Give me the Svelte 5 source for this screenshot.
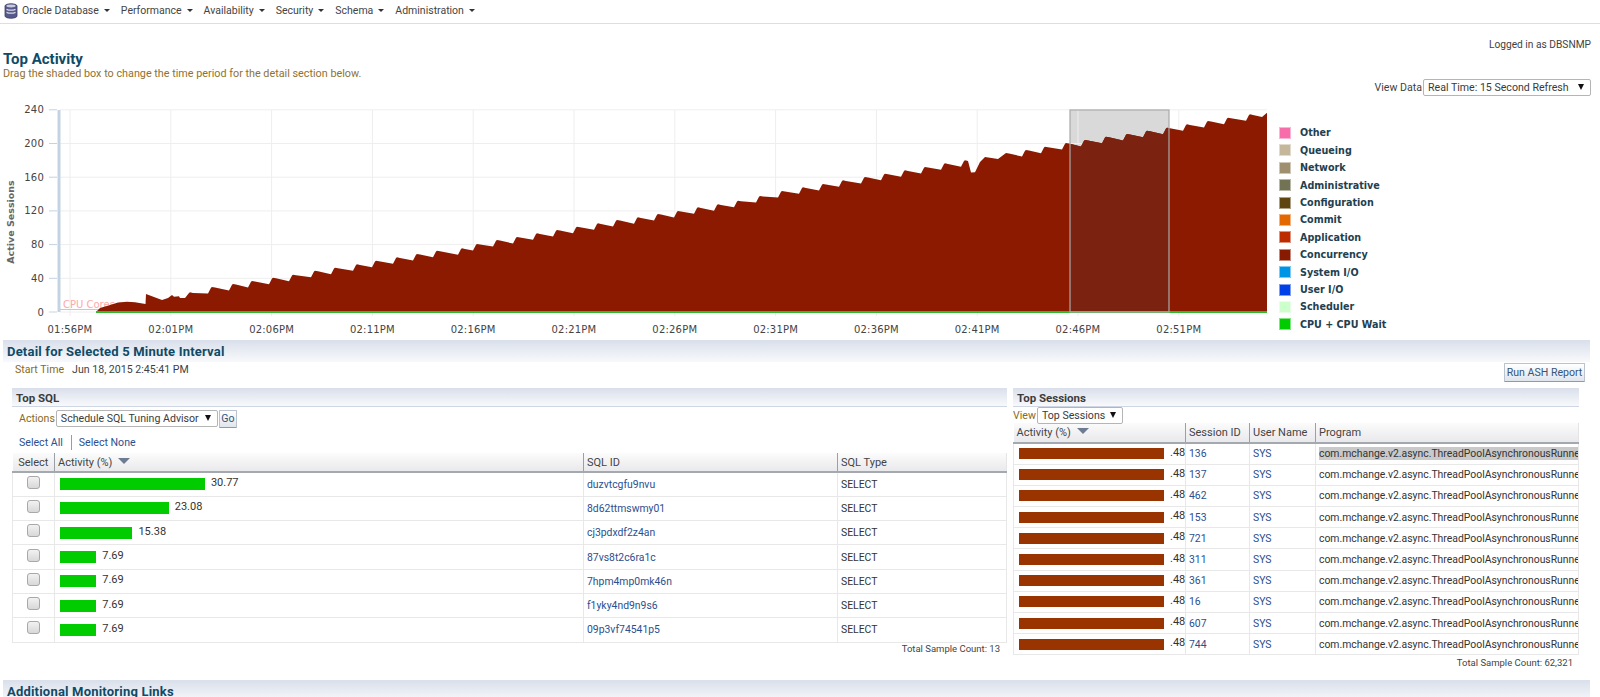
<script>
  const navItems = ['Oracle Database', 'Performance', 'Availability', 'Security', 'Schema', 'Administration'];
  const legend = [
    ['Other', '#f76daa'], ['Queueing', '#c5b79b'], ['Network', '#9f8f6f'], ['Administrative', '#717354'],
    ['Configuration', '#5f4510'], ['Commit', '#e46800'], ['Application', '#bd2b00'], ['Concurrency', '#871a00'],
    ['System I/O', '#0094e7'], ['User I/O', '#0042e7'], ['Scheduler', '#ccffcc'], ['CPU + CPU Wait', '#00cc00']
  ];
  const sql = [
    [30.77, 'duzvtcgfu9nvu'], [23.08, '8d62ttmswmy01'], [15.38, 'cj3pdxdf2z4an'], [7.69, '87vs8t2c6ra1c'],
    [7.69, '7hpm4mp0mk46n'], [7.69, 'f1yky4nd9n9s6'], [7.69, '09p3vf74541p5']
  ];
  const sessions = [136, 137, 462, 153, 721, 311, 361, 16, 607, 744];
  const program = 'com.mchange.v2.async.ThreadPoolAsynchronousRunne';

  const X0 = 70, DX = 100.8, Y0 = 312, KY = 33.7 / 40;
  const times = ['01:56', '02:01', '02:06', '02:11', '02:16', '02:21', '02:26', '02:31', '02:36', '02:41', '02:46', '02:51'];
  const xTicks = times.map((t, i) => ({ t: t + 'PM', x: X0 + i * DX }));
  const yTicks = [0, 40, 80, 120, 160, 200, 240].map((v) => ({ v, y: Y0 - v * KY }));

  const start = [[96, 312], [100, 308], [110, 305], [118, 302.5], [127, 301.7], [135, 302.3], [145.5, 304], [146, 294], [154, 297], [162, 300], [168, 298], [172, 295], [174, 296.7], [179, 296.3], [180, 298], [185, 298]];
  const peaks = [
    [190, 292.3], [212, 287], [233, 284], [252, 281], [273, 277.7], [293, 274.7], [315, 270.7], [335, 267.7],
    [357, 264.3], [376, 260.7], [397, 257.3], [417, 254], [437, 250.7], [462, 248.3], [477, 244], [497, 240],
    [517, 237], [537, 233.3], [557, 230], [577, 226.7], [598, 223.3], [617, 220], [638, 217.3], [658, 214],
    [678, 211], [698, 207.3], [718, 204.3], [738, 200.7], [760, 196], [782, 191], [803, 187.3], [823, 184],
    [843, 180.3], [865, 177], [885, 173.7], [905, 170.3], [925, 167], [945, 163.3], [965, 160.3]
  ];
  const peaksAfterDip = [
    [1006, 153], [1026, 150], [1045, 146.7], [1066, 143], [1085, 140], [1106, 136.7], [1127, 134], [1147, 130.7],
    [1167, 127.7], [1187, 124.3], [1208, 121], [1228, 117.7], [1250, 114.3]
  ];
  function teeth(list, next) {
    const out = [];
    list.forEach((q, i) => {
      const n = list[i + 1] || next;
      out.push([q[0] - 1, q[1] + 0.8], q, [q[0] + 3, q[1] + 0.6], [n[0] - 4, n[1] + 6.5]);
    });
    return out;
  }
  const pts = [
    ...start,
    ...teeth(peaks, [975, 166]),
    [975, 172.3], [980, 162], [985, 157], [998, 159],
    ...teeth(peaksAfterDip, [1266, 110.5]),
    [1267, 112.7], [1267, 312]
  ];
  const area = 'M' + pts.map((q) => q[0].toFixed(1) + ' ' + q[1].toFixed(1)).join('L') + 'Z';
</script>

<div class="page">
  <nav class="nav">
    <svg class="db" width="14" height="16" viewBox="0 0 14 16" aria-hidden="true">
      <path d="M1 3c0-3 12-3 12 0v10c0 3-12 3-12 0z" fill="#55588a" stroke="#3d3f66" stroke-width=".8" />
      <path d="M2.5 6.3c2.5 1 6.5 1 9 0M2.5 9.3c2.5 1 6.5 1 9 0" stroke="#d9d8e8" stroke-width="1.3" fill="none" />
      <ellipse cx="7" cy="3" rx="4.6" ry="1.4" fill="#c9c9df" />
    </svg>
    {#each navItems as item}
      <span class="nav-item">{item}<i class="caret"></i></span>
    {/each}
  </nav>

  <header class="head">
    <div class="head-left">
      <h1>Top Activity</h1>
      <p>Drag the shaded box to change the time period for the detail section below.</p>
    </div>
    <div class="head-right">
      <div class="logged">Logged in as DBSNMP</div>
      <div class="view-data">
        <span>View Data</span>
        <span class="select w-real"><select><option>Real Time: 15 Second Refresh</option></select><i></i></span>
      </div>
    </div>
  </header>

  <div class="chart-row">
    <svg class="chart" width="1270" height="238" viewBox="0 100 1270 238">
      <defs>
        <clipPath id="sel"><rect x="1070" y="110" width="99" height="202" /></clipPath>
      </defs>
      <rect x="1070" y="110" width="99" height="202" fill="#d9d9d9" />
      {#each yTicks as t}
        <line x1="60" x2="1267" y1={t.y} y2={t.y} class="grid" />
        <line x1="49" x2="57" y1={t.y} y2={t.y} class="tick" />
        <text x="44" y={t.y + 3.5} text-anchor="end" class="axis">{t.v}</text>
      {/each}
      {#each xTicks as t}
        <line x1={t.x} x2={t.x} y1="110" y2="316" class="grid" />
        <text x={t.x} y="333" text-anchor="middle" class="axis">{t.t}</text>
      {/each}
      <rect x="57.5" y="110" width="3" height="202" fill="#c3d3e3" />
      <line x1="60" x2="110" y1="309.5" y2="309.5" stroke="#ffb0b0" />
      <text x="63" y="308" class="cores">CPU Cores</text>
      <path d={area} fill="#8b1a00" />
      <path d={area} fill="#7b2310" clip-path="url(#sel)" />
      <rect x="96" y="311" width="1171" height="2" fill="#2fbb2f" />
      <rect x="1070" y="110" width="99" height="202" fill="none" stroke="#a9a9a9" stroke-width="1.2" />
      <text transform="translate(14 222) rotate(-90)" text-anchor="middle" class="ylabel">Active Sessions</text>
    </svg>
    <ul class="legend">
      {#each legend as [name, color]}
        <li><i style="background:{color}"></i>{name}</li>
      {/each}
    </ul>
  </div>

  <div class="band">Detail for Selected 5 Minute Interval</div>

  <div class="start-row">
    <div><span class="lbl">Start Time</span><span class="start-val">Jun 18, 2015 2:45:41 PM</span></div>
    <button class="btn ash">Run ASH Report</button>
  </div>

  <div class="panels">
    <section class="panel left">
      <h2>Top SQL</h2>
      <div class="actions">
        <span class="lbl">Actions</span>
        <span class="select w-act"><select><option>Schedule SQL Tuning Advisor</option></select><i></i></span>
        <button class="btn go">Go</button>
      </div>
      <div class="sel-links"><a href="#a">Select All</a><b></b><a href="#a">Select None</a></div>
      <table class="tbl sql">
        <colgroup><col style="width:42px" /><col style="width:529px" /><col style="width:254px" /><col /></colgroup>
        <thead>
          <tr><th class="c">Select</th><th>Activity (%)<i class="sort"></i></th><th>SQL ID</th><th>SQL Type</th></tr>
        </thead>
        <tbody>
          {#each sql as [pct, id]}
            <tr>
              <td class="c"><span class="check"></span></td>
              <td class="act"><div class="barcell"><span class="bar green" style="width:{pct * 4.71}px"></span><span class="val">{pct}</span></div></td>
              <td><a href="#a">{id}</a></td>
              <td>SELECT</td>
            </tr>
          {/each}
        </tbody>
      </table>
      <div class="total">Total Sample Count: 13</div>
    </section>

    <section class="panel right">
      <h2>Top Sessions</h2>
      <div class="viewrow">
        <span class="lbl">View</span>
        <span class="select w-top"><select><option>Top Sessions</option></select><i></i></span>
      </div>
      <table class="tbl sess">
        <colgroup><col style="width:172px" /><col style="width:64px" /><col style="width:66px" /><col /></colgroup>
        <thead>
          <tr><th>Activity (%)<i class="sort"></i></th><th>Session ID</th><th>User Name</th><th>Program</th></tr>
        </thead>
        <tbody>
          {#each sessions as id, i}
            <tr>
              <td class="act"><div class="barcell"><span class="bar brown"></span><span class="val s">.48</span></div></td>
              <td><a href="#a">{id}</a></td>
              <td><a href="#a">SYS</a></td>
              <td class="prog"><span class:hl={i === 0}>{program}</span></td>
            </tr>
          {/each}
        </tbody>
      </table>
      <div class="total t2">Total Sample Count: 62,321</div>
    </section>
  </div>

  <div class="band">Additional Monitoring Links</div>
</div>

<style>
  :global(body) { margin: 0; background: #fff; }
  .page {
    height: 697px;
    overflow: hidden;
    font-family: Roboto, "Liberation Sans", sans-serif;
    font-size: 10.6px;
    color: #3f3f3f;
  }
  .nav {
    height: 24px;
    box-sizing: border-box;
    border-bottom: 1px solid #d6e0ea;
    display: flex;
    align-items: center;
    padding: 0 0 3px 4px;
    font-size: 10.5px;
    color: #444;
  }
  .db { margin-right: 4px; margin-top: 1px; }
  .nav-item { display: inline-flex; align-items: center; margin-right: 11px; white-space: nowrap; }
  .caret {
    width: 0; height: 0; margin-left: 5px;
    border-left: 3px solid transparent; border-right: 3px solid transparent;
    border-top: 3px solid #333;
  }
  .head { display: flex; justify-content: space-between; height: 73px; padding: 0 9px 0 3px; margin-bottom: 3px; }
  .head-left { padding-top: 27px; }
  h1 { margin: 0; font: bold 15px/16px Roboto, sans-serif; color: #0f4a66; }
  .head-left p { margin: 1px 0 0; font-size: 10.8px; line-height: 12px; color: #8f7230; }
  .head-right { display: flex; flex-direction: column; align-items: flex-end; padding-top: 14px; }
  .logged { line-height: 13px; height: 41px; font-size: 10.2px; }
  .view-data { display: flex; align-items: center; gap: 1px; }

  .select { position: relative; display: inline-block; }
  .select select {
    appearance: none; -webkit-appearance: none;
    display: block; width: 100%; height: 100%; box-sizing: border-box;
    margin: 0; padding: 0 0 0 4px;
    background: #fff; border: 1px solid #b5b5b5; border-radius: 2px;
    font: inherit; font-size: 10.6px; color: #3a3a3a;
  }
  .select i {
    position: absolute; right: 7px; top: 5px; width: 0; height: 0;
    border-left: 3px solid transparent; border-right: 3px solid transparent;
    border-top: 6px solid #111;
    pointer-events: none;
  }
  .w-real { width: 168px; height: 17px; }
  .w-act { width: 162px; height: 17px; }
  .w-top { width: 86px; height: 17px; }

  .chart-row { display: flex; height: 240px; }
  .chart { display: block; flex: none; }
  .grid { stroke: #eeeeee; stroke-width: 1; }
  .tick { stroke: #c3d3e3; }
  .axis { font: 10px "DejaVu Sans", sans-serif; fill: #444; letter-spacing: .2px; }
  .cores { font: 10px "DejaVu Sans", sans-serif; fill: #ffa8a8; }
  .ylabel { font: bold 9.5px "DejaVu Sans", sans-serif; fill: #666; }
  .legend { list-style: none; margin: 24.3px 0 0 9px; padding: 0; }
  .legend li {
    height: 17.4px; display: flex; align-items: center;
    font: bold 9.6px "DejaVu Sans", sans-serif; color: #23404f; white-space: nowrap;
  }
  .legend i { width: 10px; height: 10px; border: 1px solid rgba(255, 255, 255, .5); margin-right: 9px; }

  .band {
    height: 22px; margin: 0 10px 0 3px; padding-left: 4px;
    background: linear-gradient(#d9dfeb, #f8f9fb);
    font: bold 13px/23px Roboto, sans-serif; color: #0f4a66; white-space: nowrap; letter-spacing: .2px;
  }
  .start-row {
    height: 26px; box-sizing: border-box; display: flex; justify-content: space-between; align-items: flex-start;
    padding: 1px 15px 0 15px; line-height: 14px;
  }
  .lbl { color: #8a6a20; }
  .start-val { margin-left: 8px; }
  .btn {
    box-sizing: border-box; margin: 0; padding: 0; white-space: nowrap;
    background: linear-gradient(#ffffff, #dfe5ee);
    border: 1px solid #b9c2cd; border-bottom-color: #8f9aa8; border-radius: 1px;
    font: inherit; font-size: 10.6px; color: #34557a;
  }
  .ash { width: 81px; height: 19px; }
  .go { width: 18px; height: 18px; }

  .panels { display: flex; height: 292px; }
  .panel h2 {
    margin: 0; height: 19px; box-sizing: border-box; padding-left: 4px;
    background: linear-gradient(#d9dfeb, #f8f9fb);
    border-bottom: 1px solid #cdd6e2;
    font: bold 11.5px/20px Roboto, sans-serif; color: #3c3c3c;
  }
  .left { width: 995px; margin-left: 12px; }
  .right { width: 566px; margin-left: 6px; }
  .actions { height: 23px; display: flex; align-items: center; padding-left: 7px; gap: 1px; }
  .sel-links { height: 23px; display: flex; align-items: center; padding-left: 7px; box-sizing: border-box; padding-top: 2px; }
  .sel-links b { width: 1px; height: 15px; background: #8ba0b5; margin: 0 7px 0 8px; }
  a { color: #2c4f8f; text-decoration: none; }
  .viewrow { height: 16px; display: flex; align-items: center; }
  .viewrow .lbl { width: 24px; overflow: hidden; }
  .viewrow .select { margin-top: 1px; }

  .tbl { width: 100%; border-collapse: collapse; table-layout: fixed; font-size: 10.4px; }
  .tbl th {
    height: 19px; padding: 0 0 0 3px; box-sizing: border-box; text-align: left; font-weight: normal; font-size: 11px;
    background: linear-gradient(#fbfbfb, #e9e9ec);
    border-right: 1px solid #9aa0a8; border-bottom: 2px solid #a4a9b0;
    white-space: nowrap; color: #444;
  }
  .tbl th:last-child { border-right: 1px solid #e5e5e5; }
  .tbl th.c, .tbl td.c { text-align: center; padding-left: 0; }
  .tbl td {
    padding: 0 0 0 3px; box-sizing: border-box; border: 1px solid #e8e8e8; border-top: 0;
    white-space: nowrap; overflow: hidden; color: #333;
  }
  .sql td { height: 24.3px; }
  .sess th { height: 20px; }
  .sess td { height: 21.2px; }
  .tbl td.act { padding-left: 5px; padding-right: 0; }
  .sort {
    display: inline-block; width: 0; height: 0; margin-left: 6px; vertical-align: 2px;
    border-left: 6px solid transparent; border-right: 6px solid transparent;
    border-top: 6px solid #6d7c92;
  }
  .check {
    display: inline-block; width: 11px; height: 11px; vertical-align: 1px;
    background: linear-gradient(#f2f2f2, #d8d8d8);
    border: 1px solid #a8a8a8; border-radius: 3px;
  }
  .barcell { display: flex; align-items: center; }
  .bar { display: block; flex: none; height: 12px; }
  .green { background: #00cc00; }
  .brown { width: 145px; height: 11px; background: #993300; }
  .val { margin-left: 6px; margin-bottom: 3px; font-size: 11px; }
  .prog span { display: block; }
  .hl { background: #c9c9c9; }
  .total { text-align: right; font-size: 9.5px; line-height: 11px; padding-right: 7px; color: #444; }
  .t2 { padding-right: 6px; padding-top: 2px; }
</style>
